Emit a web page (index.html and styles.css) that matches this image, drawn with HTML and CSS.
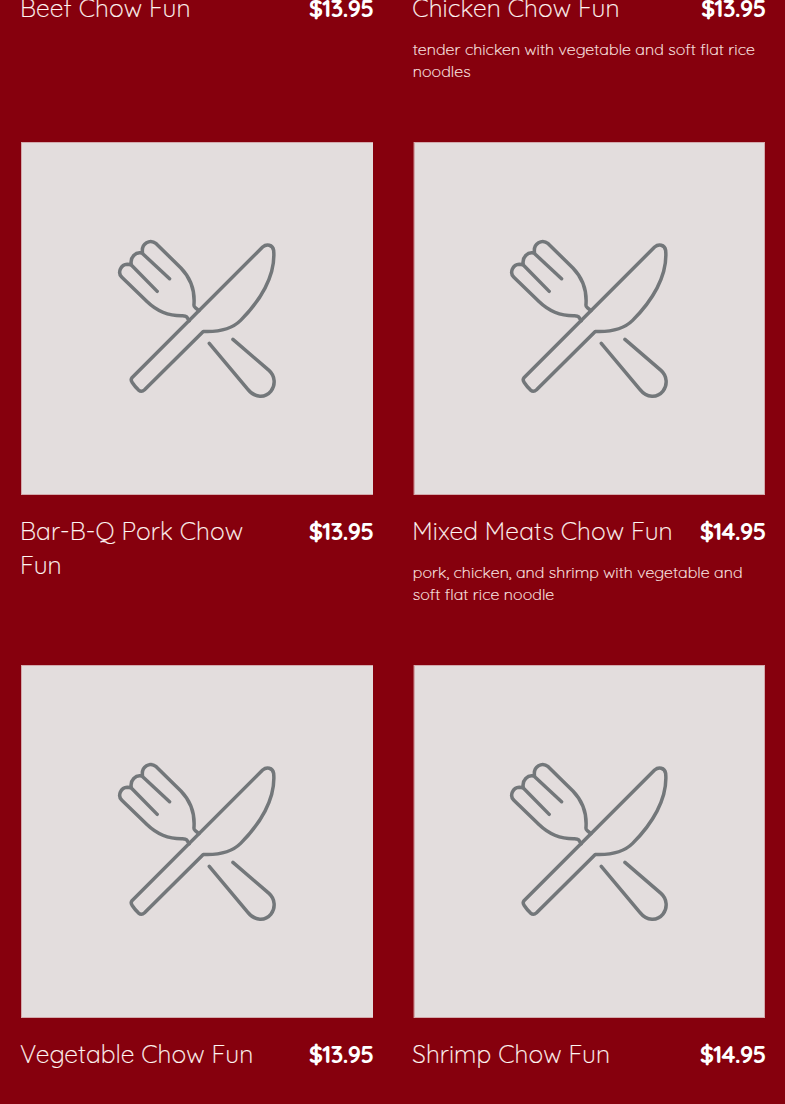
FILE: index.html
```html
<!DOCTYPE html>
<html lang="en">
<head>
<meta charset="utf-8">
<title>Chow Fun</title>
<link rel="stylesheet" href="styles.css">
</head>
<body>
<svg class="defs" aria-hidden="true">
  <symbol id="cutlery" viewBox="0 0 352 352">
    <g transform="translate(78.8 82.8) scale(.33333)" fill="none" stroke="#73777a" stroke-width="10.5" stroke-linecap="round" stroke-linejoin="round">
      <path d="M268 287L260 275Q257 272 248 272C205 273 170 257 142 230L66 157C51 142 64 119 82 118C88 118 92 119 95 121L172 199M95 121C88 96 109 79 126 84L209 161M128 84C123 54 151 41 169 56L243 129C270 157 286 192 282 240Q282 245 286 248L297 257"/>
      <path d="M488 66L97 457Q91 464 97 472Q105 484 116 495Q125 502 134 494L310 319C358 321 395 313 422 286C478 230 528 154 521 76C518 59 500 56 488 66Z"/>
      <path d="M328 355L443 492C465 520 496 519 513 498C527 480 526 453 507 436L399 343"/>
    </g>
  </symbol>
</svg>
<main class="menu">
  <article class="item">
    <div class="head"><h3 class="name">Beef Chow Fun</h3><span class="price">$13.95</span></div>
  </article>
  <article class="item">
    <div class="head"><h3 class="name">Chicken Chow Fun</h3><span class="price">$13.95</span></div>
    <p class="desc">tender chicken with vegetable and soft flat rice<br>noodles</p>
  </article>
  <article class="item">
    <div class="photo"><svg class="icon"><use href="#cutlery"/></svg></div>
    <div class="head"><h3 class="name">Bar-B-Q Pork Chow<br>Fun</h3><span class="price">$13.95</span></div>
  </article>
  <article class="item">
    <div class="photo soft"><svg class="icon"><use href="#cutlery"/></svg></div>
    <div class="head"><h3 class="name">Mixed Meats Chow Fun</h3><span class="price">$14.95</span></div>
    <p class="desc">pork, chicken, and shrimp with vegetable and<br>soft flat rice noodle</p>
  </article>
  <article class="item">
    <div class="photo"><svg class="icon"><use href="#cutlery"/></svg></div>
    <div class="head"><h3 class="name">Vegetable Chow Fun</h3><span class="price">$13.95</span></div>
  </article>
  <article class="item">
    <div class="photo soft"><svg class="icon"><use href="#cutlery"/></svg></div>
    <div class="head"><h3 class="name">Shrimp Chow Fun</h3><span class="price">$14.95</span></div>
  </article>
</main>
</body>
</html>
```
FILE: styles.css
```css
html, body { margin: 0; height: 1104px; overflow: hidden; background: #86000d; }
body { color: #fff; font-family: Quicksand, Lato, sans-serif; }
.defs { display: none; }
.menu {
  display: grid;
  grid-template-columns: minmax(0, 1fr) minmax(0, 1fr);
  grid-template-rows: 151.5px 523px 429.5px;
  column-gap: 40px;
  padding: 0 20px 0 20.5px;
  margin-top: -9.5px;
}
.photo {
  box-sizing: border-box;
  height: 352.5px;
  margin-bottom: 19px;
  background: #e3dddd;
  box-shadow: inset 1px 1px #d3a9ac, inset 0 -1px #d3a9ac;
}
.photo.soft { box-shadow: inset 1px 0 #a8474f, inset 2px 1px #d3a9ac, inset -1px -1px #d3a9ac; }
.icon { display: block; width: 100%; height: 100%; }
.soft .icon { filter: blur(.45px); }
.head { display: flex; justify-content: space-between; }
.name { margin: 0 0 0 -.5px; font-size: 24.6px; font-weight: 300; line-height: 34px; letter-spacing: .1px; white-space: nowrap; color: #fff5f2; -webkit-text-stroke: .2px #fff5f2; }
.price { font-size: 24px; font-weight: 700; line-height: 34px; letter-spacing: -.9px; margin-right: -.5px; }
.desc { margin: 13.5px 0 0; font-size: 16px; font-weight: 300; line-height: 22px; letter-spacing: .06px; white-space: nowrap; color: #ffece8; -webkit-text-stroke: .2px #ffece8; }
```
